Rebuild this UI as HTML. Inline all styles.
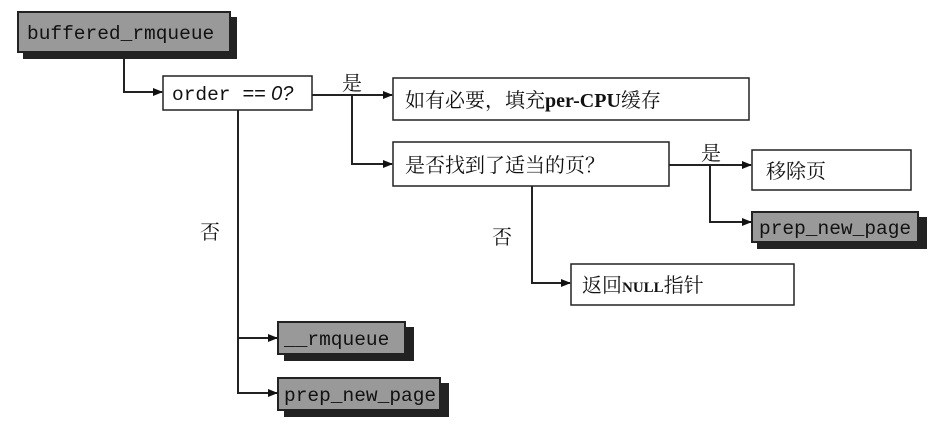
<!DOCTYPE html>
<html><head><meta charset="utf-8"><style>
html,body{margin:0;padding:0;background:#fff}
svg{display:block}
.m{font-family:"Liberation Mono",monospace;font-size:19.5px;fill:#111}
.c{font-family:"Liberation Serif","Noto Serif CJK SC",serif;font-size:20px;fill:#111}
</style></head><body>
<svg width="946" height="432" viewBox="0 0 946 432" xmlns="http://www.w3.org/2000/svg">
<defs><marker id="a" markerWidth="10" markerHeight="8" refX="9" refY="4" orient="auto" markerUnits="userSpaceOnUse"><path d="M0,0 L10,4 L0,8 Z" fill="#111"/></marker></defs>
<g stroke="#222" stroke-width="2" fill="none">
<rect x="24" y="18" width="212" height="40" fill="#222"/>
<rect x="18" y="12" width="212" height="40" fill="#999"/>
<rect x="758" y="218" width="168" height="30" fill="#222"/>
<rect x="752" y="212" width="166" height="30" fill="#999"/>
<rect x="285" y="328" width="128" height="32" fill="#222"/>
<rect x="278" y="322" width="127" height="32" fill="#999"/>
<rect x="285" y="384" width="163" height="32" fill="#222"/>
<rect x="278" y="378" width="162" height="32" fill="#999"/>
<rect x="163" y="76" width="149" height="34" fill="#fff" stroke-width="1.5"/>
<rect x="393" y="78" width="356" height="42" fill="#fff" stroke-width="1.5"/>
<rect x="393" y="142" width="276" height="44" fill="#fff" stroke-width="1.5"/>
<rect x="752" y="150" width="159" height="40" fill="#fff" stroke-width="1.5"/>
<rect x="571" y="264" width="223" height="41" fill="#fff" stroke-width="1.5"/>
<path d="M124 52 V92 H162" marker-end="url(#a)"/>
<path d="M312 95 H392" marker-end="url(#a)"/>
<path d="M352 95 V164 H392" marker-end="url(#a)"/>
<path d="M238 110 V338 H277" marker-end="url(#a)"/>
<path d="M238 338 V393 H277" marker-end="url(#a)"/>
<path d="M669 165 H751" marker-end="url(#a)"/>
<path d="M710 165 V222 H751" marker-end="url(#a)"/>
<path d="M532 186 V283 H570" marker-end="url(#a)"/>
</g>
<text class="m" x="27" y="39">buffered_rmqueue</text>
<text class="m" x="172" y="100">order <tspan font-family="Liberation Sans" font-style="italic" font-size="20">== 0?</tspan></text>
<text class="m" x="759" y="234">prep_new_page</text>
<text class="m" x="284" y="345">__rmqueue</text>
<text class="m" x="284" y="401">prep_new_page</text>
<text class="c" x="405" y="107">如有必要，填充<tspan font-weight="bold">per-CPU</tspan>缓存</text>
<text class="c" x="405" y="172">是否找到了适当的页？</text>
<text class="c" x="766" y="178">移除页</text>
<text class="c" x="582" y="292">返回<tspan font-size="15" font-weight="bold">NULL</tspan>指针</text>
<text class="c" x="342" y="90">是</text>
<text class="c" x="701" y="160">是</text>
<text class="c" x="200" y="239">否</text>
<text class="c" x="492" y="244">否</text>
</svg>
</body></html>
